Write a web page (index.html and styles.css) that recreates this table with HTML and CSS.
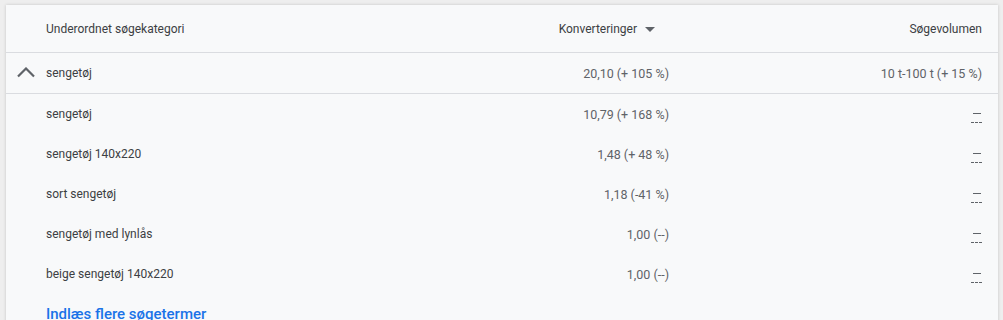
FILE: index.html
```html
<!DOCTYPE html>
<html lang="da">
<head>
<meta charset="utf-8">
<title>Underordnet søgekategori</title>
<link rel="stylesheet" href="styles.css">
</head>
<body>
<div class="card">
  <div class="row head">
    <div class="c-name">Underordnet søgekategori</div>
    <div class="c-conv"><span>Konverteringer</span><svg class="sort" width="10" height="5" viewBox="0 0 10 5"><path d="M0 0L5 5L10 0Z" fill="#5f6368"/></svg></div>
    <div class="c-vol">Søgevolumen</div>
  </div>
  <div class="row parent">
    <div class="c-name"><svg class="chev" width="18" height="11" viewBox="0 0 18 11"><polyline points="1,9.5 9,1.5 17,9.5" fill="none" stroke="#5f6368" stroke-width="2.2"/></svg>sengetøj</div>
    <div class="c-conv val">20,10 (+ 105 %)</div>
    <div class="c-vol val">10 t-100 t (+ 15 %)</div>
  </div>
  <div class="children">
    <div class="row child">
      <div class="c-name">sengetøj</div>
      <div class="c-conv val">10,79 (+ 168 %)</div>
      <div class="c-vol"><span class="nodata"><i class="d1"></i><i class="d2"></i></span></div>
    </div>
    <div class="row child">
      <div class="c-name">sengetøj 140x220</div>
      <div class="c-conv val">1,48 (+ 48 %)</div>
      <div class="c-vol"><span class="nodata"><i class="d1"></i><i class="d2"></i></span></div>
    </div>
    <div class="row child">
      <div class="c-name">sort sengetøj</div>
      <div class="c-conv val">1,18 (-41 %)</div>
      <div class="c-vol"><span class="nodata"><i class="d1"></i><i class="d2"></i></span></div>
    </div>
    <div class="row child">
      <div class="c-name">sengetøj med lynlås</div>
      <div class="c-conv val">1,00 (--)</div>
      <div class="c-vol"><span class="nodata"><i class="d1"></i><i class="d2"></i></span></div>
    </div>
    <div class="row child">
      <div class="c-name">beige sengetøj 140x220</div>
      <div class="c-conv val">1,00 (--)</div>
      <div class="c-vol"><span class="nodata"><i class="d1"></i><i class="d2"></i></span></div>
    </div>
  </div>
  <div class="more"><a href="#">Indlæs flere søgetermer</a></div>
</div>
</body>
</html>
```

FILE: styles.css
```css
html, body {
  margin: 0;
  padding: 0;
  background: #eeeeee;
  height: 100%;
  overflow: hidden;
}
body {
  font-family: Roboto, "Noto Sans", Arial, sans-serif;
  font-size: 12px;
  color: #3c4043;
  padding: 5px 5px 0 6px;
  box-sizing: border-box;
}
.card {
  background: #f8f9fa;
  box-shadow: 0 0 3px rgba(0,0,0,0.18);
  min-height: 400px;
}
.row {
  display: grid;
  grid-template-columns: 1fr 200px 313px;
  align-items: center;
  padding: 0 16px 0 40px;
}
.head {
  height: 47px;
  border-bottom: 1px solid #dadce0;
  color: #3c4043;
}
.parent {
  height: 40px;
  border-bottom: 1px solid #dadce0;
}
.child {
  height: 40px;
}
.c-name {
  position: relative;
  display: flex;
  align-items: center;
}
.c-conv, .c-vol {
  display: flex;
  justify-content: flex-end;
  align-items: center;
}
.val {
  font-size: 12.5px;
}
.head .c-conv {
  padding-right: 14px;
}
.sort {
  margin-left: 8px;
  margin-top: 1px;
}
.chev {
  position: absolute;
  left: -29px;
  top: calc(50% - 6px);
}
.val {
  color: #5f6368;
}
.nodata {
  display: flex;
  flex-direction: column;
  align-items: center;
  gap: 8px;
  margin-top: 7px;
}
.nodata i {
  display: block;
  height: 1px;
}
.d1 {
  width: 8px;
  background: #5f6368;
}
.d2 {
  width: 11px;
  background: repeating-linear-gradient(to right, #5f6368 0 3px, transparent 3px 4px);
}
.more {
  padding: 11px 0 0 40px;
}
.more a {
  color: #1a73e8;
  font-size: 15px;
  font-weight: 500;
  text-decoration: none;
}
```
